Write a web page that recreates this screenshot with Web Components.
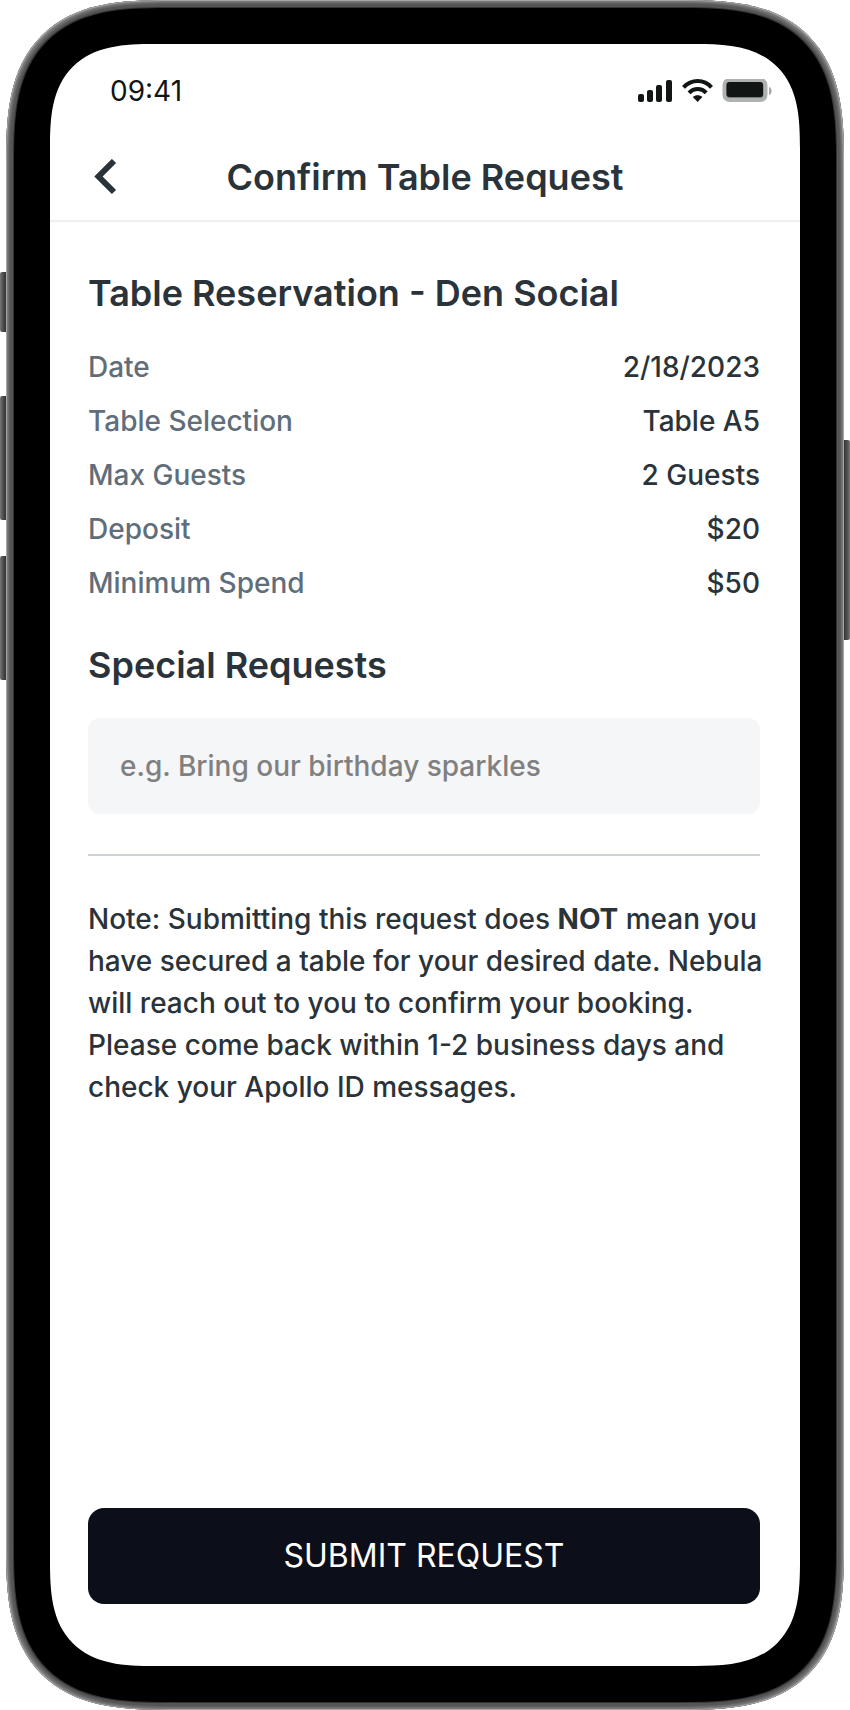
<!DOCTYPE html>
<html lang="en">
  <head>
    <meta charset="UTF-8" />
    <meta name="viewport" content="width=device-width, initial-scale=1.0" />
    <title>Confirm Table Request</title>
    <style>
      body {
        margin: 0;
        background: #fff;
        color: #2a333a;
        font-family: Inter, "Liberation Sans", sans-serif;
        font-size: 28px;
        font-weight: 500;
        line-height: 34px;
      }
    </style>
  </head>
  <body>
    <phone-frame>
      <status-bar time="09:41"></status-bar>
      <page-header>Confirm Table Request</page-header>
      <reservation-page></reservation-page>
    </phone-frame>

    <script>
      class PhoneFrame extends HTMLElement {
        constructor() {
          super();
          this.shadowDOM = this.attachShadow({ mode: "open" });
        }

        connectedCallback() {
          this.shadowDOM.innerHTML = `
          <style>
            :host {
              display: block;
              position: relative;
              padding: 0 6px;
            }

            .frame {
              box-sizing: border-box;
              display: flex;
              min-height: 100vh;
              padding: 8px;
              border-radius: 123px;
              background: #555;
              box-shadow: inset 0 0 1px 1px #aaa, inset 0 0 2px 3px #777, inset 0 0 2px 6px #555;
            }

            .bezel {
              display: flex;
              flex: 1;
              min-width: 0;
              padding: 36px;
              border-radius: 115px;
              background: #000;
              box-shadow: 0 0 0 1px #333;
            }

            .screen {
              box-sizing: border-box;
              display: flex;
              flex: 1;
              flex-direction: column;
              min-width: 0;
              overflow: hidden;
              padding-top: 26px;
              border-radius: 79px;
              background: #fff;
            }

            /* smooth corners where the browser has them */
            @supports (corner-shape: superellipse(1.5)) {
              .frame, .bezel, .screen {
                corner-shape: superellipse(1.5);
              }
              .frame { border-radius: 164px; }
              .bezel { border-radius: 153px; }
              .screen { border-radius: 105px; }
            }

            .key {
              position: absolute;
              left: 0;
              width: 6px;
              background: linear-gradient(90deg, #777, #555 40%, #333);
              border-radius: 2px 0 0 2px;
            }

            .silent { top: 272px; height: 60px; }
            .up { top: 396px; height: 124px; }
            .down { top: 556px; height: 124px; }

            .power {
              top: 440px;
              right: 0;
              left: auto;
              height: 200px;
              background: linear-gradient(90deg, #333, #555 60%, #777);
              border-radius: 0 2px 2px 0;
            }
          </style>
          <span class="key silent"></span>
          <span class="key up"></span>
          <span class="key down"></span>
          <span class="key power"></span>
          <div class="frame">
            <div class="bezel">
              <div class="screen"><slot></slot></div>
            </div>
          </div>`;
        }
      }

      class StatusBar extends HTMLElement {
        constructor() {
          super();
          this.shadowDOM = this.attachShadow({ mode: "open" });
        }

        connectedCallback() {
          this.shadowDOM.innerHTML = `
          <style>
            :host {
              display: flex;
              align-items: center;
              justify-content: space-between;
              height: 42px;
              padding: 0 28px 0 60px;
              color: #111514;
              font-weight: 400;
            }

            svg {
              display: block;
            }
          </style>
          <span>${this.getAttribute("time")}</span>
          <svg width="136" height="24" viewBox="0 0 136 24" fill="#111514" aria-hidden="true">
            <rect x="2" y="15" width="6" height="8" rx="2" />
            <rect x="11" y="11" width="6" height="12" rx="2" />
            <rect x="20" y="6" width="6" height="17" rx="2" />
            <rect x="30" y="1" width="6" height="22" rx="2" />
            <g fill="none" stroke="#111514" stroke-width="4">
              <path d="M47.500 8.300C55.500 0 68 0 75.500 8.300" />
              <path d="M53 13.800C58 8.800 65.500 8.800 70.200 13.800" />
            </g>
            <path d="M61.600 23l-4.800-4.900c2.600-2.500 7-2.500 9.600 0z" />
            <rect x="88.500" y="1" width="41" height="20" rx="5" fill="#777b7a" stroke="#b0b1b1" stroke-width="4" />
            <rect x="90.500" y="3" width="36.500" height="15" rx="3" />
            <path d="M133 8c3.500 1 3.500 7 0 8z" fill="#a8a9a9" />
          </svg>`;
        }
      }

      class PageHeader extends HTMLElement {
        constructor() {
          super();
          this.shadowDOM = this.attachShadow({ mode: "open" });
        }

        connectedCallback() {
          this.shadowDOM.innerHTML = `
          <style>
            :host {
              display: grid;
              grid-template-columns: 48px 1fr 48px;
              align-items: center;
              height: 86px;
              padding: 22px 32px 0;
              border-bottom: 2px solid #efeff0;
            }

            button {
              display: flex;
              align-items: center;
              justify-content: center;
              height: 48px;
              padding: 0;
              border: 0;
              background: none;
              color: inherit;
            }

            h1 {
              margin: 0;
              text-align: center;
              font-size: 36px;
              font-weight: 600;
              line-height: 46px;
            }
          </style>
          <button type="button" aria-label="Back">
            <svg width="24" height="36" viewBox="0 0 24 36" fill="none" stroke="currentColor" stroke-width="6">
              <path d="M20 2L4.500 17.500L20 33" />
            </svg>
          </button>
          <h1><slot></slot></h1>`;
        }
      }

      class DetailList extends HTMLElement {
        constructor() {
          super();
          this.shadowDOM = this.attachShadow({ mode: "open" });
        }

        set details(details) {
          this._details = details;
          this.render();
        }

        getRows() {
          return this._details
            .map(
              (item) =>
                "<div><dt>" + item.label + "</dt><dd>" + item.value + "</dd></div>"
            )
            .join("");
        }

        render() {
          this.shadowDOM.innerHTML = `
          <style>
            :host {
              display: block;
            }

            dl {
              display: flex;
              flex-direction: column;
              gap: 20px;
              margin: 0;
            }

            div {
              display: flex;
              justify-content: space-between;
            }

            dt {
              color: #5f6e7a;
            }

            dd {
              margin: 0;
            }
          </style>
          <dl>${this.getRows()}</dl>`;
        }
      }

      class ReservationPage extends HTMLElement {
        constructor() {
          super();
          this.shadowDOM = this.attachShadow({ mode: "open" });
        }

        connectedCallback() {
          this.shadowDOM.innerHTML = `
          <style>
            :host {
              box-sizing: border-box;
              display: flex;
              flex: 1;
              flex-direction: column;
              padding: 48px 40px 62px 38px;
            }

            h2 {
              margin: 0;
              font-size: 36px;
              font-weight: 600;
              line-height: 46px;
            }

            detail-list {
              margin: 34px 0 42px;
            }

            input {
              box-sizing: border-box;
              width: 100%;
              height: 96px;
              margin: 30px 0 0;
              padding: 0 32px;
              border: 0;
              border-radius: 12px;
              background: #f5f6f8;
              color: inherit;
              font: inherit;
            }

            input::placeholder {
              color: #808080;
              opacity: 1;
            }

            hr {
              width: 100%;
              margin: 40px 0 42px;
              border: 0;
              border-top: 2px solid #cdd2d5;
            }

            /* the note runs a little wider than the form */
            p {
              margin: 0 -12px 0 0;
              line-height: 42px;
            }

            strong {
              font-weight: 700;
            }

            button {
              height: 96px;
              margin-top: auto;
              border: 0;
              border-radius: 16px;
              background: #0c0e19;
              color: #fff;
              font: inherit;
              font-size: 32px;
              font-weight: 400;
            }
          </style>
          <h2>Table Reservation - Den Social</h2>
          <detail-list></detail-list>
          <h2><label for="requests">Special Requests</label></h2>
          <input id="requests" type="text" placeholder="e.g. Bring our birthday sparkles" />
          <hr />
          <p>
            Note: Submitting this request does <strong>NOT</strong> mean you have
            secured a table for your desired date. Nebula will reach out to you to
            confirm your booking. Please come back within 1-2 business days and
            check your Apollo ID messages.
          </p>
          <button type="button">SUBMIT REQUEST</button>`;

          this.shadowDOM.querySelector("detail-list").details = [
            { label: "Date", value: "2/18/2023" },
            { label: "Table Selection", value: "Table A5" },
            { label: "Max Guests", value: "2 Guests" },
            { label: "Deposit", value: "$20" },
            { label: "Minimum Spend", value: "$50" },
          ];
        }
      }

      customElements.define("phone-frame", PhoneFrame);
      customElements.define("status-bar", StatusBar);
      customElements.define("page-header", PageHeader);
      customElements.define("detail-list", DetailList);
      customElements.define("reservation-page", ReservationPage);
    </script>
  </body>
</html>
